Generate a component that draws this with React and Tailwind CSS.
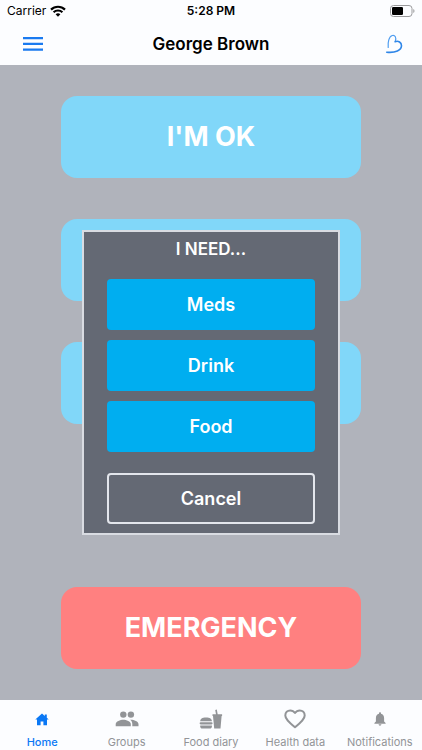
import React from 'react'

function HomeIcon() {
  return (
    <svg viewBox="0 0 14 13" className="w-[14px] h-[13px]" fill="currentColor">
      <path d="M7 .5 9.800 3V1.500h2V4.800L13.700 6.600H12V12.300H8.400V8.500H5.600v3.800H2V6.600H.3z" />
    </svg>
  )
}

function GroupsIcon() {
  return (
    <svg viewBox="0 0 24 16" className="w-6 h-4" fill="currentColor">
      <circle cx="8.300" cy="3.600" r="3.200" />
      <circle cx="15.900" cy="3.600" r="3.200" />
      <path d="M.7 15.300v-2.200c0-2.700 4.600-4.400 7.600-4.400s7.500 1.700 7.500 4.400v2.200z" />
      <path d="M17.300 15.300h6.200v-2.200c0-2.700-4.400-4.300-7.600-4.400-.3 0-.6 0-.8.1 1.400 1 2.200 2.500 2.200 4.200z" />
    </svg>
  )
}

function FoodIcon() {
  return (
    <svg viewBox="0 0 24 20" className="w-6 h-5" fill="currentColor">
      <path d="M1.200 12.300C1.200 9.600 3 8.400 7 8.400s5.900 1.200 5.900 3.900z" />
      <rect x=".6" y="13.200" width="13" height="2.200" rx="1.100" />
      <path d="M1.200 16.400h11.700v.8c0 1.500-.8 2.300-2.200 2.300H3.400c-1.400 0-2.200-.8-2.200-2.300z" />
      <path d="M13.500 5.200H17L16.200.9l1.600-.5.9 4.800h4.400v1.900h-.5l-1.100 12.400h-6.300L14 7.100h-.5z" />
    </svg>
  )
}

function HeartIcon() {
  return (
    <svg viewBox="0 0 22 20" className="w-[22px] h-5" fill="none" stroke="currentColor" strokeWidth="2" strokeLinejoin="round">
      <path d="M11 18.300C5 13.200 1.300 10.200 1.300 6.400c0-2.900 2.200-5 4.900-5C8.200 1.400 9.900 2.400 11 4c1.100-1.600 2.800-2.600 4.800-2.600 2.700 0 4.900 2.100 4.900 5 0 3.800-3.700 6.800-9.700 11.900z" />
    </svg>
  )
}

function BellIcon() {
  return (
    <svg viewBox="0 0 12 14" className="w-3 h-[14px]" fill="currentColor">
      <path d="M6 .3c.6 0 1 .4 1 1v.4c2 .5 3.100 2.100 3.100 4.200v3.600l1.500 1.500v.7H.4V11l1.500-1.500V5.900C1.900 3.800 3 2.200 5 1.700v-.4c0-.6.4-1 1-1zM4.600 12.300h2.800c0 .8-.6 1.400-1.400 1.400s-1.400-.6-1.400-1.400z" />
    </svg>
  )
}

const tabs = [
  { label: 'Home', icon: <HomeIcon />, active: true },
  { label: 'Groups', icon: <GroupsIcon /> },
  { label: 'Food diary', icon: <FoodIcon /> },
  { label: 'Health data', icon: <HeartIcon /> },
  { label: 'Notifications', icon: <BellIcon /> },
]

function StatusBar() {
  return (
    <div className="grid grid-cols-3 items-center h-[22px] px-[7px] text-[12px] text-black">
      <div className="flex items-center gap-1">
        <span>Carrier</span>
        <svg viewBox="0 0 16 12" className="w-4 h-3" fill="none" stroke="currentColor" strokeWidth="2.2">
          <path d="M1 4.600a10 10 0 0 1 14 0" />
          <path d="M3.600 7.300a6.300 6.300 0 0 1 8.800 0" />
          <path d="M8 11.800 5.600 9.300a3.500 3.500 0 0 1 4.800 0z" fill="currentColor" stroke="none" />
        </svg>
      </div>
      <span className="text-center font-semibold">5:28 PM</span>
      <svg viewBox="0 0 25 12" className="w-[25px] h-3 justify-self-end">
        <rect x="0.5" y="0.5" width="21.5" height="11" rx="3" fill="none" stroke="#9a9a9c" />
        <rect x="2" y="2" width="11" height="8" rx="1.2" fill="#000" />
        <path d="M23.300 4v4c1.600-.8 1.600-3.200 0-4z" fill="#9a9a9c" />
      </svg>
    </div>
  )
}

function Header() {
  return (
    <header className="bg-[#fcfdff]">
      <StatusBar />
      <div className="grid grid-cols-[1fr_auto_1fr] items-center h-[43px] px-[19px]">
        <button type="button" aria-label="Menu" className="justify-self-start px-1 text-[#1a7af0]">
          <svg viewBox="0 0 20 14" className="w-5 h-[14px]" fill="currentColor">
            <path d="M0 0h20v2.300H0zM0 5.800h20v2.300H0zM0 11.500h20v2.300H0z" />
          </svg>
        </button>
        <h1 className="text-[17px] leading-6 font-semibold text-black">George Brown</h1>
        <a href="#logo" aria-label="Logo" className="justify-self-end">
          <svg viewBox="0 0 18 20" className="w-[18px] h-5" fill="none" strokeLinecap="round">
            <path d="M3.200 13.500C2.600 8 4 2.500 7.300 1.500c2.800-.7 4.300 2.300 3 5.800" stroke="#4f9df0" strokeWidth="1.200" />
            <path d="M10.100 7.700c3.200-1.200 6.400.7 6.400 4.100 0 4.500-6 7.300-14.800 6.400" stroke="#2f86e8" strokeWidth="1.600" />
          </svg>
        </a>
      </div>
    </header>
  )
}

function BigButton({ className, children, ...props }) {
  return (
    <button
      type="button"
      className={`w-full h-[82px] rounded-2xl text-[27px] leading-8 font-bold text-white ${className}`}
      {...props}
    >
      {children}
    </button>
  )
}

function NeedDialog() {
  return (
    <div
      role="dialog"
      aria-labelledby="need-title"
      className="w-[258px] border-2 border-[#d9dce2] bg-[#646974] px-[23px] pt-[5px] pb-[9px] text-white"
    >
      <h2 id="need-title" className="text-center text-[17px] leading-6 font-semibold">I NEED...</h2>
      <div className="mt-[18px] flex flex-col gap-[10px]">
        {['Meds', 'Drink', 'Food'].map((need) => (
          <button key={need} type="button" className="h-[51px] rounded bg-[#00aef0] text-[18px] leading-6 font-semibold">
            {need}
          </button>
        ))}
      </div>
      <button
        type="button"
        className="mt-[21px] w-full h-[51px] rounded border-2 border-[#e3e6ec] text-[18px] leading-6 font-semibold"
      >
        Cancel
      </button>
    </div>
  )
}

function TabBar() {
  return (
    <nav className="grid grid-cols-5 h-[50px] bg-[#fcfdff]">
      {tabs.map((tab) => (
        <a
          key={tab.label}
          href={`#${tab.label}`}
          className={`flex flex-col items-center pt-[7px] ${tab.active ? 'text-[#0a78f5]' : 'text-[#929497]'}`}
        >
          <span className="flex items-center justify-center h-6">{tab.icon}</span>
          <span className={`mt-1 text-[11px] leading-[14px] whitespace-nowrap ${tab.active ? 'font-medium' : 'font-normal'}`}>
            {tab.label}
          </span>
        </a>
      ))}
    </nav>
  )
}

function App() {
  return (
    <div className="min-h-screen flex flex-col font-['Inter',sans-serif]">
      <Header />
      <main className="relative flex-1 flex flex-col bg-[#b0b3bb] px-[61px] py-[31px]">
        <div className="flex flex-col gap-[41px]">
          <BigButton className="bg-[#81d7f9]">I'M OK</BigButton>
          <BigButton className="bg-[#81d7f9]" aria-label="I need" />
          <BigButton className="bg-[#81d7f9]" aria-label="More" />
        </div>
        <BigButton className="mt-auto bg-[#ff8080]">EMERGENCY</BigButton>
        <div className="absolute inset-0 flex items-center justify-center">
          <NeedDialog />
        </div>
      </main>
      <TabBar />
    </div>
  )
}

export default App
